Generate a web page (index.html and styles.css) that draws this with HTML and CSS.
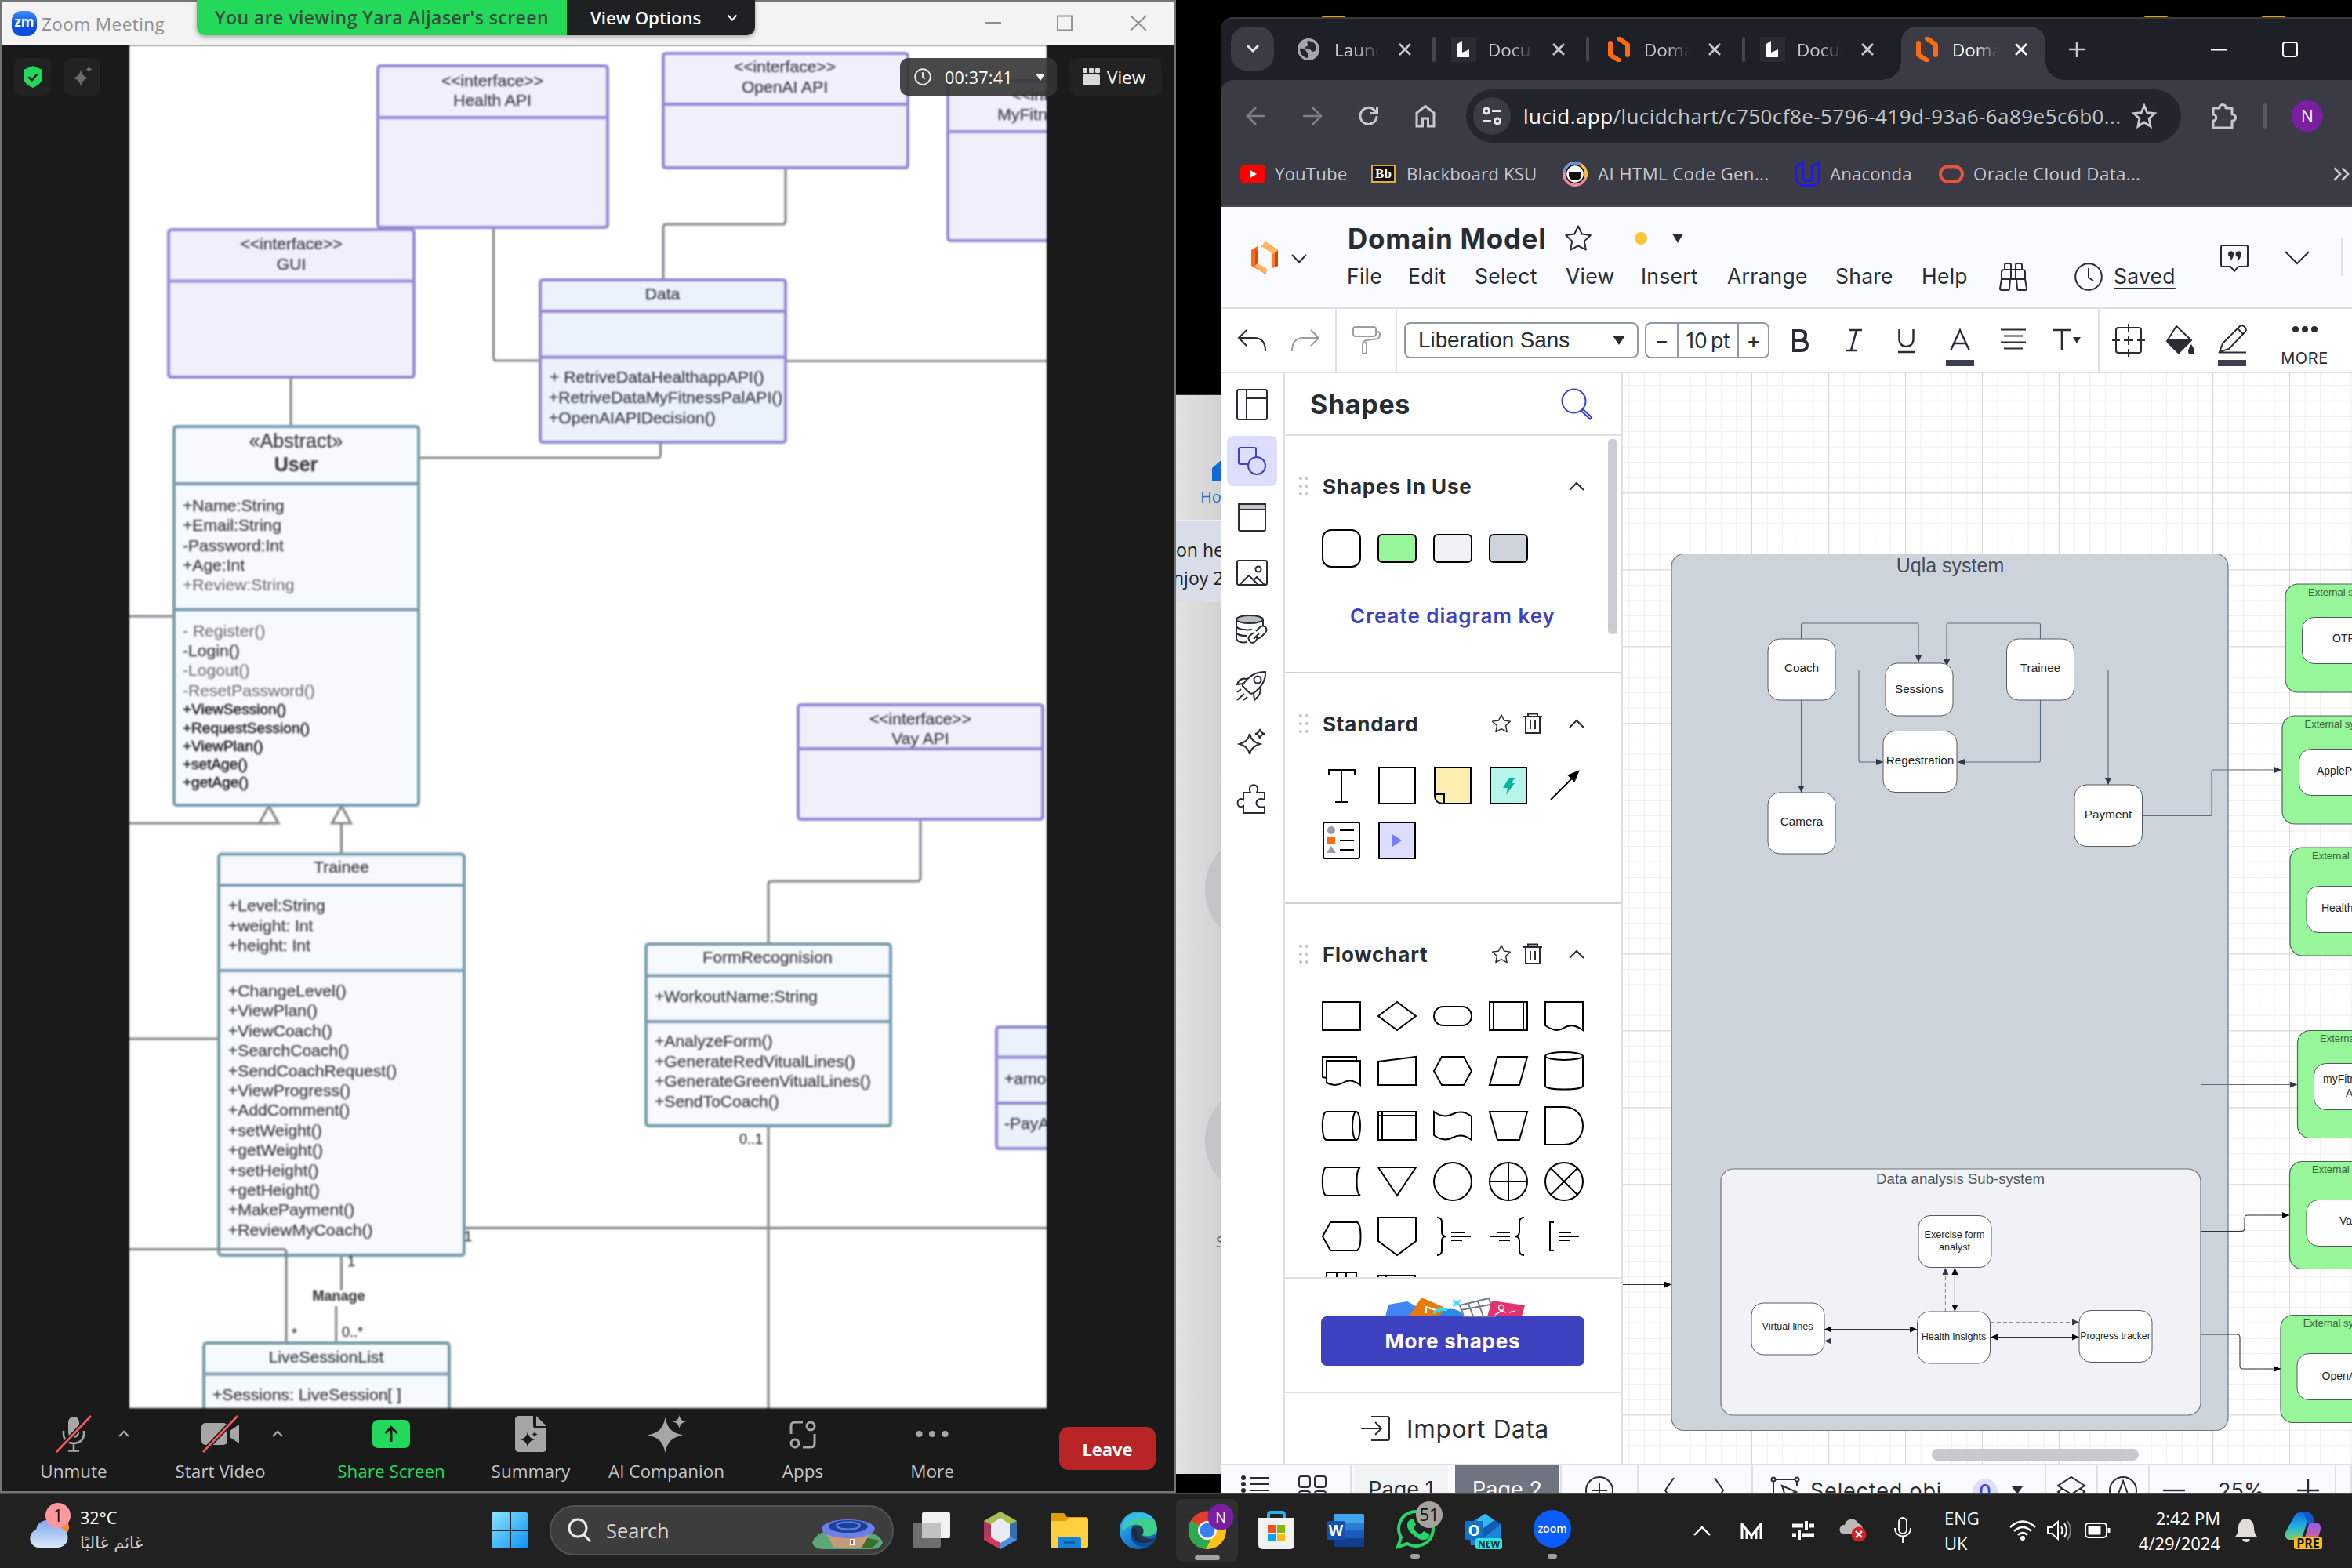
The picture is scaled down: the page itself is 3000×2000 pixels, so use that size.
FILE: index.html
```html
<!DOCTYPE html>
<html lang="en">
<head>
<meta charset="utf-8">
<title>Desktop</title>
<link rel="stylesheet" href="styles.css">
</head>
<body>
<svg width="0" height="0" class="defs">
  <defs>
    <symbol id="x" viewBox="0 0 18 18"><path d="M2 2 16 16M16 2 2 16" fill="none" stroke="currentColor" stroke-width="2.6"/></symbol>
    <symbol id="lucid" viewBox="0 0 30 32"><path d="M4 8v15l11 7M15 2l11 8v13" fill="none" stroke="#ff6a13" stroke-width="6" stroke-linejoin="round" stroke-linecap="round"/></symbol>
    <symbol id="spark" viewBox="0 0 32 32"><path d="M16 0c2 10 6 14 16 16-10 2-14 6-16 16-2-10-6-14-16-16 10-2 14-6 16-16z" fill="currentColor"/></symbol>
    <symbol id="star" viewBox="0 0 36 36"><path d="M18 2.500l4.800 10 11 1.500-8 7.600 2 11L18 27.300l-9.800 5.300 2-11-8-7.600 11-1.500z" fill="none" stroke="currentColor" stroke-width="2" stroke-linejoin="round"/></symbol>
    <symbol id="trash" viewBox="0 0 24 28"><path d="M0 5h24M6 5V1.500h12V5M3 5v21h18V5M9 10v11M15 10v11" fill="none" stroke="currentColor" stroke-width="2"/></symbol>
    <symbol id="up" viewBox="0 0 20 12"><path d="M1 11 10 2l9 9" fill="none" stroke="currentColor" stroke-width="2"/></symbol>
    <symbol id="dots" viewBox="0 0 12 24"><g fill="#bfc2c6"><circle cx="2" cy="2" r="2"/><circle cx="10" cy="2" r="2"/><circle cx="2" cy="12" r="2"/><circle cx="10" cy="12" r="2"/><circle cx="2" cy="22" r="2"/><circle cx="10" cy="22" r="2"/></g></symbol>
    <symbol id="docs" viewBox="0 0 32 32"><path d="M0 0h32v32H0z" fill="#2a2c33"/><path d="M8 9l6-4v15l9-4v10H8z" fill="#fff"/></symbol>
    <marker id="arr" viewBox="0 0 9 8" refX="9" refY="4" markerWidth="9" markerHeight="8" markerUnits="userSpaceOnUse" orient="auto-start-reverse"><path d="M0 0 9 4 0 8z" fill="#2f3a46"/></marker>
    <marker id="arrk" viewBox="0 0 9 8" refX="9" refY="4" markerWidth="9" markerHeight="8" markerUnits="userSpaceOnUse" orient="auto-start-reverse"><path d="M0 0 9 4 0 8z" fill="#000"/></marker>
    <pattern id="minor" x="2136" y="726.300" width="19.600" height="19.600" patternUnits="userSpaceOnUse"><path d="M.5 0v19.600M0 .5h19.600" stroke="#ededed" fill="none"/></pattern>
    <pattern id="major" x="2136" y="726.300" width="98" height="98" patternUnits="userSpaceOnUse"><path d="M.5 0v98M0 .5h98" stroke="#d6d6d6" fill="none"/></pattern>
    <linearGradient id="win" x2="1" y2="1"><stop offset="0" stop-color="#8be4ff"/><stop offset="1" stop-color="#0a93f5"/></linearGradient>
    <linearGradient id="cloud" x2="0" y2="1"><stop offset="0" stop-color="#7fa8ee"/><stop offset="1" stop-color="#dbe8fb"/></linearGradient>
    <linearGradient id="edge" x2="1" y2="1"><stop offset="0" stop-color="#35c1e8"/><stop offset=".45" stop-color="#1a88dc"/><stop offset="1" stop-color="#0b4ea0"/></linearGradient>
    <linearGradient id="cop" x2="0" y2="1"><stop offset="0" stop-color="#1667e0"/><stop offset=".5" stop-color="#1fb0e6"/><stop offset="1" stop-color="#7fd06a"/></linearGradient>
    <linearGradient id="cop2" x2="0" y2="1"><stop offset="0" stop-color="#8d5cf2"/><stop offset="1" stop-color="#f2607a"/></linearGradient>
  </defs>
</svg>

<div class="desktop">

  <!-- window behind the browser -->
  <div class="back-window">
    <svg class="back-home" viewBox="0 0 30 30"><path d="M0 30V13L15 0v30z" fill="#1169d8"/></svg>
    <span class="back-link">Ho</span>
    <div class="back-banner"><span>on he</span><span>njoy 2</span></div>
    <i class="back-circle c1"></i><i class="back-circle c2"></i>
    <span class="back-s">S</span>
  </div>
  <i class="folder f1"></i><i class="folder f2"></i><i class="folder f3"></i>

  <!-- Zoom meeting -->
  <section class="zoom">
    <header class="zoom-title">
      <span class="zm">zm</span><span class="zoom-name">Zoom Meeting</span>
      <svg class="zoom-ctl" width="210" height="24" viewBox="0 0 210 24"><path d="M1 11h20M93 2.500h18v18H93zM186 2l20 19M206 2l-20 19" fill="none" stroke="#8d8d8d" stroke-width="1.800"/></svg>
    </header>
    <div class="share-bar"><span class="viewing">You are viewing Yara Aljaser's screen</span><span class="view-opt">View Options<svg width="14" height="10" viewBox="0 0 14 10"><path d="M1.500 1.500 7 7.500l5.500-6" fill="none" stroke="#fff" stroke-width="2"/></svg></span></div>
    <div class="zoom-stage">
      <div class="stage-btn b1"><svg width="26" height="28" viewBox="0 0 26 28"><path d="M13 0l12 5v9c0 7-5 11-12 14C6 25 1 21 1 14V5z" fill="#23d959"/><path d="M7.500 14l4 4.500 7-8" fill="none" stroke="#1a1a1a" stroke-width="2.600"/></svg></div>
      <div class="stage-btn b2"><svg width="26" height="28" viewBox="0 0 26 28" color="#6b6b6b"><use href="#spark" x="0" y="4" width="22" height="23"/><use href="#spark" x="17" y="0" width="9" height="9"/></svg></div>

      <svg class="uml" width="1170" height="1738" viewBox="165 58 1170 1738">
        <rect x="165" y="58" width="1170" height="1738" fill="#fff"/>
        <g class="wire">
          <path d="M629.500 290V456q0 4 4 4H690M1002 214V282q0 4-4 4H850q-4 0-4 4V357M1002 460.500H1335M371 481V544M842.500 564V580q0 4-4 4H534M165 786H222M165 1050H343M435.500 1050V1090M165 1325H279M435.500 1601V1646M428.700 1666V1713M592 1566.400H1335M980 1436V1796M1174 1045V1120q0 4-4 4H984q-4 0-4 4V1204"/>
          <path d="M343 1028l12 22h-24zM435.500 1028l12 22h-24z" fill="#fff"/>
        </g>
        <g class="vio">
          <path d="M486 84H771q4 0 4 4V286q0 4-4 4H486q-4 0-4-4V88q0-4 4-4zM482 150H775"/>
          <path d="M850 68H1154q4 0 4 4V210q0 4-4 4H850q-4 0-4-4V72q0-4 4-4zM846 133H1158"/>
          <path d="M1213 103H1500V307H1213q-4 0-4-4V107q0-4 4-4zM1209 168H1500"/>
          <path d="M219 293H524q4 0 4 4V477q0 4-4 4H219q-4 0-4-4V297q0-4 4-4zM215 358.500H528"/>
          <path d="M1022 899H1326q4 0 4 4V1041q0 4-4 4H1022q-4 0-4-4V903q0-4 4-4zM1018 955H1330"/>
        </g>
        <g class="vio blue">
          <path d="M693 357H998q4 0 4 4V560q0 4-4 4H693q-4 0-4-4V361q0-4 4-4zM689 397H1002M689 455.500H1002"/>
          <path d="M1275 1310H1500V1465H1275q-4 0-4-4V1314q0-4 4-4zM1271 1348.500H1500M1271 1407H1500"/>
        </g>
        <g class="teal">
          <path d="M226 544H530q4 0 4 4V1023q0 4-4 4H226q-4 0-4-4V548q0-4 4-4zM222 617H534M222 777.500H534"/>
          <path d="M283 1089.500H588q4 0 4 4V1597q0 4-4 4H283q-4 0-4-4V1093.500q0-4 4-4zM279 1129H592M279 1238H592"/>
          <path d="M828 1204H1132q4 0 4 4V1432q0 4-4 4H828q-4 0-4-4V1208q0-4 4-4zM824 1244.500H1136M824 1303H1136"/>
          <path d="M264 1713H569q4 0 4 4V1900H260V1717q0-4 4-4zM260 1752.500H573"/>
        </g>
        <path class="wirel" d="M165 1593.500H361q4 0 4 4V1713"/>
        <g class="t mid" transform="translate(0 -1)">
          <text x="628" y="103">&lt;&lt;interface&gt;&gt;</text><text x="628" y="128">Health API</text>
          <text x="1001" y="85">&lt;&lt;interface&gt;&gt;</text><text x="1001" y="111">OpenAI API</text>
          <text x="1355" y="121">&lt;&lt;interface&gt;&gt;</text><text x="1355" y="146">MyFitnessPal API</text>
          <text x="371.500" y="311">&lt;&lt;interface&gt;&gt;</text><text x="371.500" y="337">GUI</text>
          <text x="845" y="375">Data</text>
          <text x="377.500" y="563" class="big">«Abstract»</text><text x="377.500" y="593" class="big bold">User</text>
          <text x="435.500" y="1106">Trainee</text>
          <text x="1174" y="917">&lt;&lt;interface&gt;&gt;</text><text x="1174" y="942">Vay API</text>
          <text x="979" y="1221">FormRecognision</text>
          <text x="416" y="1731">LiveSessionList</text>
          <text x="432" y="1654" class="small bold">Manage</text>
        </g>
        <g class="t" transform="translate(0 -1)">
          <text x="701" y="481">+ RetriveDataHealthappAPI()</text><text x="700" y="507">+RetriveDataMyFitnessPalAPI()</text><text x="700" y="533">+OpenAIAPIDecision()</text>
          <text x="233" y="645">+Name:String</text><text x="233" y="670">+Email:String</text><text x="233" y="696">-Password:Int</text><text x="233" y="721">+Age:Int</text><text x="233" y="746" class="pale">+Review:String</text>
          <text x="233" y="805" class="pale">- Register()</text><text x="233" y="830">-Login()</text><text x="233" y="855" class="pale">-Logout()</text><text x="233" y="881" class="pale">-ResetPassword()</text>
          <text x="233" y="905" class="dk">+ViewSession()</text><text x="233" y="929" class="dk">+RequestSession()</text><text x="233" y="952" class="dk">+ViewPlan()</text><text x="233" y="975" class="dk">+setAge()</text><text x="233" y="998" class="dk">+getAge()</text>
          <text x="291" y="1155">+Level:String</text><text x="291" y="1181">+weight: Int</text><text x="291" y="1206">+height: Int</text>
          <text x="291" y="1264">+ChangeLevel()</text><text x="291" y="1289">+ViewPlan()</text><text x="291" y="1315">+ViewCoach()</text><text x="291" y="1340">+SearchCoach()</text><text x="291" y="1366">+SendCoachRequest()</text><text x="291" y="1391">+ViewProgress()</text><text x="291" y="1416">+AddComment()</text><text x="291" y="1442">+setWeight()</text><text x="291" y="1467">+getWeight()</text><text x="291" y="1493">+setHeight()</text><text x="291" y="1518">+getHeight()</text><text x="291" y="1543">+MakePayment()</text><text x="291" y="1569">+ReviewMyCoach()</text>
          <text x="835" y="1271">+WorkoutName:String</text><text x="835" y="1328">+AnalyzeForm()</text><text x="835" y="1354">+GenerateRedVitualLines()</text><text x="835" y="1379">+GenerateGreenVitualLines()</text><text x="835" y="1405">+SendToCoach()</text>
          <text x="1281" y="1376">+amount:Int</text><text x="1281" y="1433">-PayAmount()</text>
          <text x="271" y="1779">+Sessions: LiveSession[ ]</text><text x="271" y="1804">+SessionDate:String</text>
          <g class="small"><text x="943" y="1454">0..1</text><text x="592" y="1578">1</text><text x="443" y="1610">1</text><text x="372" y="1702">*</text><text x="436" y="1700">0..*</text></g>
        </g>
      </svg>

      <div class="pill timer"><svg width="22" height="22" viewBox="0 0 22 22"><circle cx="11" cy="11" r="9.800" fill="none" stroke="#eee" stroke-width="1.800"/><path d="M11 5v6.500l3 2" fill="none" stroke="#eee" stroke-width="1.800"/></svg><span>00:37:41</span><svg width="12" height="9" viewBox="0 0 12 9"><path d="M0 0h12L6 9z" fill="#fff"/></svg></div>
      <div class="pill view"><svg width="22" height="22" viewBox="0 0 22 22" fill="#d9d9d9"><rect width="6" height="6" rx="1"/><rect x="8" width="6" height="6" rx="1"/><rect x="16" width="6" height="6" rx="1"/><rect y="8" width="22" height="14" rx="2"/></svg><span>View</span></div>
    </div>
    <footer class="zoom-bar">
      <div class="zb"><svg width="48" height="48" viewBox="0 0 48 48"><rect x="17" y="2" width="14" height="27" rx="7" fill="#a6a6a6"/><path d="M11 20v4c0 16 26 16 26 0v-4M24 37v8M17 45.500h14" fill="none" stroke="#a6a6a6" stroke-width="2.600"/><path d="M46 1 2 47" stroke="#1a1a1a" stroke-width="6"/><path d="M46 1 2 47" stroke="#f4595c" stroke-width="2.600"/></svg><span>Unmute</span></div>
      <svg class="car" width="14" height="9" viewBox="0 0 14 9"><path d="M1 8 7 2l6 6" fill="none" stroke="#a6a6a6" stroke-width="2.400"/></svg>
      <div class="zb"><svg width="50" height="48" viewBox="0 0 50 48"><rect x="1" y="10" width="33" height="28" rx="5" fill="#a6a6a6"/><path d="M37 20l12-8v24l-12-8z" fill="#a6a6a6"/><path d="M47 1 3 47" stroke="#1a1a1a" stroke-width="6"/><path d="M47 1 3 47" stroke="#f4595c" stroke-width="2.600"/></svg><span>Start Video</span></div>
      <svg class="car" width="14" height="9" viewBox="0 0 14 9"><path d="M1 8 7 2l6 6" fill="none" stroke="#a6a6a6" stroke-width="2.400"/></svg>
      <div class="zb green"><svg width="48" height="48" viewBox="0 0 48 48"><rect y="6" width="48" height="36" rx="7" fill="#23d959"/><path d="M24 34V16M16.500 23l7.500-7.500 7.500 7.500" fill="none" stroke="#1a1a1a" stroke-width="3"/></svg><span>Share Screen</span></div>
      <div class="zb"><svg width="42" height="48" viewBox="0 0 42 48" color="#1a1a1a"><path d="M6 1h18v12q0 4 4 4h13v25q0 5-5 5H6q-5 0-5-5V6q0-5 5-5z" fill="#a6a6a6"/><path d="M28 1l13 13H28z" fill="#a6a6a6"/><use href="#spark" x="7" y="20" width="20" height="22"/><use href="#spark" x="22" y="20" width="8" height="9"/></svg><span>Summary</span></div>
      <div class="zb"><svg width="50" height="48" viewBox="0 0 50 48" color="#a6a6a6"><use href="#spark" x="1" y="3" width="45" height="45"/><use href="#spark" x="33" y="0" width="17" height="17"/></svg><span>AI Companion</span></div>
      <div class="zb"><svg width="34" height="48" viewBox="0 0 34 48" fill="none" stroke="#a6a6a6" stroke-width="3"><circle cx="27" cy="14" r="5"/><circle cx="7" cy="36" r="5"/><path d="M17 9H7q-5 0-5 5v10M32 24v12q0 5-5 5H17"/></svg><span>Apps</span></div>
      <div class="zb"><svg width="42" height="48" viewBox="0 0 42 48" fill="#a6a6a6"><circle cx="4.500" cy="24" r="4"/><circle cx="21" cy="24" r="4"/><circle cx="37.500" cy="24" r="4"/></svg><span>More</span></div>
      <button class="leave">Leave</button>
    </footer>
  </section>

  <!-- Chrome -->
  <section class="chrome">
    <div class="tabs">
      <span class="tab-search"><svg width="18" height="12" viewBox="0 0 18 12"><path d="M2 2l7 7 7-7" fill="none" stroke="#e3e4e8" stroke-width="3"/></svg></span>
      <div class="tab sep"><svg width="28" height="28" viewBox="0 0 28 28"><circle cx="14" cy="14" r="14" fill="#a3a6ad"/><path d="M3 13c4-1 7 0 8 3s4 2 3 9C7 25 3 19 3 13zM13 3c-2 3 1 4 0 6s-3 1-3 3 5 0 7 3 5 2 7-1C25 8 20 3 13 3z" fill="#24262d"/></svg><span class="tt">Launch</span><svg class="tx"><use href="#x"/></svg></div>
      <div class="tab sep"><svg width="32" height="32"><use href="#docs"/></svg><span class="tt">Docum</span><svg class="tx"><use href="#x"/></svg></div>
      <div class="tab sep"><svg width="30" height="32"><use href="#lucid"/></svg><span class="tt">Domain</span><svg class="tx"><use href="#x"/></svg></div>
      <div class="tab"><svg width="32" height="32"><use href="#docs"/></svg><span class="tt">Docum</span><svg class="tx"><use href="#x"/></svg></div>
      <div class="tab active"><svg width="30" height="32"><use href="#lucid"/></svg><span class="tt">Domain</span><svg class="tx"><use href="#x"/></svg></div>
      <svg width="20" height="20" viewBox="0 0 20 20"><path d="M10 0v20M0 10h20" stroke="#c6c8ce" stroke-width="2.600"/></svg>
      <svg width="20" height="20" viewBox="0 0 20 20"><path d="M0 10.500h20" stroke="#fff" stroke-width="2"/></svg>
      <svg width="20" height="20" viewBox="0 0 20 20"><rect x="1" y="1" width="18" height="18" rx="3" fill="none" stroke="#fff" stroke-width="2"/></svg>
    </div>
    <div class="urlbar">
      <svg width="26" height="26" viewBox="0 0 26 26"><path d="M25 13H2M13 2 2 13l11 11" fill="none" stroke="#7d7e86" stroke-width="2.600"/></svg>
      <svg width="26" height="26" viewBox="0 0 26 26"><path d="M1 13h23M13 2l11 11-11 11" fill="none" stroke="#7d7e86" stroke-width="2.600"/></svg>
      <svg width="28" height="28" viewBox="0 0 28 28"><path d="M24 14a10.500 10.500 0 1 1-3-7.500l3 3M24.500 2v8.500H16" fill="none" stroke="#c6c8ce" stroke-width="3"/></svg>
      <svg width="26" height="30" viewBox="0 0 26 30"><path d="M2 11 13 2.500 24 11v17h-7.500V18h-7v10H2z" fill="none" stroke="#c6c8ce" stroke-width="3"/></svg>
      <div class="omni"><span class="chip"><svg width="26" height="24" viewBox="0 0 26 24" fill="none" stroke="#e4e5e8" stroke-width="3"><circle cx="6" cy="5.500" r="3.500"/><path d="M13 5.500h12M1 18.500h11"/><circle cx="20" cy="18.500" r="3.500"/></svg></span><span class="url"><b>lucid.app</b>/lucidchart/c750cf8e-5796-419d-93a6-6a89e5c6b0...</span><svg width="34" height="34" viewBox="0 0 36 36" class="bm"><path d="M18 4l4 9.500 10 1-7.500 7 2 10.500-8.500-5.500L9.500 32l2-10.500L4 14.500l10-1z" fill="none" stroke="#c6c8ce" stroke-width="3"/></svg></div>
      <svg width="34" height="34" viewBox="0 0 34 34"><path d="M3 7h8c-1-6 9-6 8 0h8v8c6-1 6 9 0 8v9H3v-9c5 0 5-8 0-8z" fill="none" stroke="#c6c8ce" stroke-width="3" stroke-linejoin="round"/></svg>
      <i class="usep"></i><span class="avatar">N</span>
    </div>
    <div class="marks">
      <svg width="32" height="24" viewBox="0 0 32 24"><rect width="32" height="24" rx="6" fill="#f00"/><path d="M12 6.500v11l9-5.500z" fill="#fff"/></svg><span>YouTube</span>
      <span class="bb">Bb</span><span>Blackboard KSU</span>
      <svg width="32" height="32" viewBox="0 0 32 32"><circle cx="16" cy="16" r="16" fill="#f08a9a"/><path d="M1 13a16 16 0 0 1 22-11l-7 14z" fill="#5a9bd0"/><path d="M25 3a16 16 0 0 1 6 18l-15-5z" fill="#f4c542"/><circle cx="16" cy="16" r="11.500" fill="#fff" stroke="#111" stroke-width="1.500"/><path d="M8 14h16v4q-1 6-8 6t-8-6z" fill="#111"/></svg><span class="wide">AI HTML Code Gen...</span>
      <svg width="32" height="32" viewBox="0 0 32 32"><path d="M2 7l9-6v19c0 8 10 6 11 0V6l9-5v21c0 8-7 9-14 9C7 31 2 28 2 20zM22 6v19" fill="none" stroke="#1f16f0" stroke-width="2.600"/></svg><span>Anaconda</span>
      <svg width="32" height="24" viewBox="0 0 32 24"><rect x="2" y="2.500" width="28" height="19" rx="9.500" fill="none" stroke="#e8523f" stroke-width="4"/></svg><span class="wide">Oracle Cloud Data...</span>
      <svg width="22" height="18" viewBox="0 0 22 18"><path d="M1.500 1.500 9 9l-7.500 7.500M11.500 1.500 19 9l-7.500 7.500" fill="none" stroke="#c6c8ce" stroke-width="2.800"/></svg>
    </div>

    <!-- Lucidchart -->
    <header class="lc-head">
      <div class="lc-logo"><svg width="36" height="42" viewBox="0 0 36 42"><path d="M1 11v20l19 11v-7L9 28V6z" fill="#ff6a13"/><path d="M9 13v15l-3 2V9z" fill="#d24f05"/><path d="M9 28l13 8-3 5L5 32z" fill="#ffb562"/><path d="M14 6l14 9v19l7-3V11L19 0z" fill="#ff7a22"/><path d="M14 6l5-6 16 11-6 5z" fill="#ffb562"/><path d="M31 15l4-3v19l-4 2z" fill="#c94800"/></svg><svg width="20" height="12" viewBox="0 0 20 12"><path d="M1 1l9 9.500L19 1" fill="none" stroke="#282c33" stroke-width="2"/></svg></div>
      <div class="lc-mid">
        <div class="lc-doc"><strong>Domain Model</strong><svg width="36" height="36"><use href="#star"/></svg><i class="dot"></i><svg width="14" height="12" viewBox="0 0 14 12"><path d="M0 0h14L7 12z" fill="#282c33"/></svg></div>
        <nav class="lc-menu"><span>File</span><span>Edit</span><span>Select</span><span>View</span><span>Insert</span><span>Arrange</span><span>Share</span><span>Help</span>
          <svg width="36" height="36" viewBox="0 0 36 36" fill="none" stroke="#282c33" stroke-width="2"><path d="M7 9V3q0-2 2-2h4q2 0 2 2v6M21 9V3q0-2 2-2h4q2 0 2 2v6M3 21V12q0-3 3-3h24q3 0 3 3v9M15 9v12M21 9v12M3 21h30M3 21 1 33q0 2 2 2h8q2 0 2-2l1-12M33 21l2 12q0 2-2 2h-8q-2 0-2-2l-1-12"/></svg>
          <svg width="36" height="36" viewBox="0 0 36 36" fill="none" stroke="#282c33" stroke-width="2"><circle cx="18" cy="18" r="16.800"/><path d="M18 7v12l6 4"/></svg><u>Saved</u></nav>
      </div>
      <div class="lc-right"><svg width="36" height="36" viewBox="0 0 36 36"><path d="M3 1h30q2 0 2 2v23q0 2-2 2H23l-5 6-5-6H3q-2 0-2-2V3q0-2 2-2z" fill="none" stroke="#282c33" stroke-width="2"/><path d="M10 12a3.600 3.600 0 1 1 7 1q-1 6-5 8 2-3 1-5-3-1-3-4zM19.500 12a3.600 3.600 0 1 1 7 1q-1 6-5 8 2-3 1-5-3-1-3-4z" fill="#282c33"/></svg><svg width="32" height="18" viewBox="0 0 32 18"><path d="M1 1l15 15L31 1" fill="none" stroke="#282c33" stroke-width="2"/></svg><i></i></div>
    </header>
    <div class="lc-tools">
      <div class="tg g1"><svg width="36" height="28" viewBox="0 0 36 28"><path d="M11 1 1 11l10 10M1 11h20q14 0 14 17" fill="none" stroke="#282c33" stroke-width="2"/></svg><svg width="36" height="28" viewBox="0 0 36 28"><path d="M25 1l10 10-10 10M35 11H15Q1 11 1 28" fill="none" stroke="#9a9da3" stroke-width="2"/></svg></div>
      <div class="tg g2"><svg width="36" height="36" viewBox="0 0 36 36" fill="none" stroke="#9a9da3" stroke-width="2"><rect x="1" y="1" width="29" height="12" rx="3"/><path d="M30 7h2q3 0 3 4t-3 5l-14 2q-3 0-3 3"/><rect x="13" y="21" width="5" height="14" rx="2"/></svg></div>
      <div class="tg g3">
        <div class="font-sel"><span>Liberation Sans</span><svg width="16" height="12" viewBox="0 0 16 12"><path d="M0 0h16L8 12z" fill="#282c33"/></svg></div>
        <div class="size"><b>−</b><span>10 pt</span><b>+</b></div>
        <svg width="24" height="56" viewBox="0 0 24 56"><path d="M3 16h8q7 0 7 6t-7 6H3zM3 28h9q8 0 8 6.500T12 41H3z" fill="none" stroke="#282c33" stroke-width="4"/></svg>
        <svg width="22" height="56" viewBox="0 0 22 56"><path d="M5 15h16M0 41h15M14 15 7 41" fill="none" stroke="#282c33" stroke-width="2.600"/></svg>
        <svg width="22" height="56" viewBox="0 0 22 56"><path d="M1.500 14v13c0 12 18 12 18 0V14M0 43h21" fill="none" stroke="#282c33" stroke-width="2.400"/></svg>
        <svg width="36" height="56" viewBox="0 0 36 56"><path d="M6 41l12-26 12 26M10 32h16" fill="none" stroke="#282c33" stroke-width="2.400"/><path d="M0 53h36v8H0z" fill="#3a414c"/></svg>
        <svg width="32" height="56" viewBox="0 0 32 56"><path d="M0 14.500h32M4 22.500h24M0 30.500h32M4 38.500h24" stroke="#282c33" stroke-width="2"/></svg>
        <svg width="36" height="56" viewBox="0 0 36 56"><path d="M0 15h22M11 15v26" stroke="#282c33" stroke-width="2.600"/><path d="M25 24h10l-5 8z" fill="#282c33"/></svg>
      </div>
      <div class="tg g4">
        <svg width="40" height="56" viewBox="0 0 40 56" fill="none" stroke="#282c33" stroke-width="2"><rect x="4" y="12" width="32" height="32" rx="3"/><path d="M20 7v10M20 39v10M-1 28h10M31 28h10M14 28h12M20 22v12"/></svg>
        <svg width="36" height="56" viewBox="0 0 36 56"><path d="M13 10 32 28 16 44 1 29z" fill="none" stroke="#282c33" stroke-width="2"/><path d="M2 27h30L15 45 1 31zM32 33q4 6 4 9a4 4 0 0 1-8 0q0-3 4-9z" fill="#282c33"/></svg>
        <svg width="36" height="56" viewBox="0 0 36 56"><path d="M2 43l4-11L28 10q3-2 6 1t1 6L14 39 2 43zM25 13l7 7M1 43.500h35" fill="none" stroke="#282c33" stroke-width="2"/><path d="M0 53h36v8H0z" fill="#3a414c"/></svg>
        <div class="more"><svg width="34" height="10" viewBox="0 0 34 10" fill="#282c33"><circle cx="5" cy="5" r="4"/><circle cx="17" cy="5" r="4"/><circle cx="29" cy="5" r="4"/></svg><span>MORE</span></div>
      </div>
    </div>
    <div class="lc-body">
      <aside class="rail">
        <span><svg width="40" height="40" viewBox="0 0 40 40"><rect x="1" y="1" width="38" height="38" rx="2"/><path d="M13 1v38M13 12h26"/></svg></span>
        <span class="on"><svg width="40" height="40" viewBox="0 0 40 40"><path d="M15 24H5q-2 0-2-2V5q0-2 2-2h18q2 0 2 2v10"/><circle cx="26" cy="26" r="11"/></svg></span>
        <span><svg width="40" height="40" viewBox="0 0 40 40"><path d="M3 3h34v7H3z" fill="#c3c5c9"/><rect x="3" y="3" width="34" height="34" rx="2"/><path d="M3 10h34"/></svg></span>
        <span><svg width="40" height="40" viewBox="0 0 40 40"><rect x="1" y="4" width="38" height="31" rx="2"/><circle cx="28" cy="15" r="3.500"/><path d="M4 35l12-12 12 12M22 29l4-4 10 10"/></svg></span>
        <span><svg width="42" height="40" viewBox="0 0 42 40"><ellipse cx="18" cy="7" rx="17" ry="5" fill="#b9bcc1"/><path d="M1 7v25c2 4 8 5 14 4M1 16c2 4 12 5 20 4M1 24c2 4 8 4 14 4M35 7v8M26 22l5-5q4-3 7 0t0 7l-6 6q-3 2-6 0M30 25l-7 7M29 30l-4 5q-4 4-7 0t0-7l5-4"/></svg></span>
        <span><svg width="40" height="40" viewBox="0 0 40 40"><path d="M8 19Q18 2 37 2q1 15-15 27l-4 1L8 20z"/><circle cx="27" cy="12" r="4.500"/><path d="M13 11Q4 9 1 18l8-1M30 22q3 8-7 16l-1-9M1 28l5-4M1 38l9-8M9 38l5-4"/></svg></span>
        <span><svg width="40" height="40" viewBox="0 0 40 40"><path d="M17 9q2 10 13 13-11 3-13 13-2-10-13-13Q15 19 17 9zM30 3q1 5 6 6-5 1-6 6-1-5-6-6 5-1 6-6z"/></svg></span>
        <span><svg width="40" height="40" viewBox="0 0 40 40"><path d="M9 12h9c-6-13 14-13 8 0h10v9c-14-5-14 13 0 9v8H9v-9c-10 6-10-13 0-8z"/></svg></span>
      </aside>
      <aside class="panel">
        <div class="p-head"><strong>Shapes</strong><svg width="40" height="40" viewBox="0 0 40 40" fill="none" stroke="#3e41c0" stroke-width="2"><circle cx="16.500" cy="16.500" r="15"/><path d="M26 29l2-2 11 10-2 2.500z"/></svg></div>
        <div class="p-scroll">
          <i class="p-thumb"></i>
          <section class="sec s1">
            <h3><svg class="dg"><use href="#dots"/></svg><span>Shapes In Use</span><i></i><i></i><svg class="up"><use href="#up"/></svg></h3>
            <div class="sw"><i class="w"></i><i class="g"></i><i class="l"></i><i class="d"></i></div>
            <a>Create diagram key</a>
          </section>
          <section class="sec s2">
            <h3><svg class="dg"><use href="#dots"/></svg><span>Standard</span><svg class="st"><use href="#star"/></svg><svg class="tr"><use href="#trash"/></svg><svg class="up"><use href="#up"/></svg></h3>
            <div class="shapes">
              <svg viewBox="-27 -27 54 54"><path d="M-16-14v-6h33v6M0-20v41M-8 21h16"/></svg>
              <svg viewBox="-27 -27 54 54"><rect x="-23" y="-23" width="46" height="46"/></svg>
              <svg viewBox="-27 -27 54 54"><path d="M-23-23h46v46h-36q-10-1-10-10z" fill="#fbecb0"/><path d="M-23 11h12v12"/></svg>
              <svg viewBox="-27 -27 54 54"><rect x="-23" y="-23" width="46" height="46" fill="#b7f5ea"/><path d="M1-10h7l-4 7h4L-3 12l2-9h-6z" fill="#00b5a0" stroke="none"/></svg>
              <svg viewBox="-27 -27 54 54"><path d="M-17 18 15-14"/><path d="M18-18 6-13l7 7z" fill="#000"/></svg>
              <svg viewBox="-27 -27 54 54"><rect x="-23" y="-23" width="46" height="46" rx="2"/><path d="M-2-13h18M-2 0h18M-2 12h18"/><g stroke="none"><circle cx="-13" cy="-13" r="5" fill="#959ca7"/><path d="M-18-5h10v9h-10z" fill="#ff6a13"/><path d="M-13 7l6 9h-12z" fill="#959ca7"/></g></svg>
              <svg viewBox="-27 -27 54 54"><rect x="-23" y="-23" width="46" height="46" fill="#dddeff"/><path d="M-6-8 6 0-6 8z" fill="#7b78ff" stroke="none"/></svg>
            </div>
          </section>
          <section class="sec s3">
            <h3><svg class="dg"><use href="#dots"/></svg><span>Flowchart</span><svg class="st"><use href="#star"/></svg><svg class="tr"><use href="#trash"/></svg><svg class="up"><use href="#up"/></svg></h3>
            <div class="shapes">
              <svg viewBox="-27 -27 54 54"><path d="M-24-18h48v36h-48z"/></svg>
              <svg viewBox="-27 -27 54 54"><path d="M-24 0 0-18 24 0 0 18z"/></svg>
              <svg viewBox="-27 -27 54 54"><rect x="-24" y="-12" width="48" height="24" rx="12"/></svg>
              <svg viewBox="-27 -27 54 54"><path d="M-24-18h48v36h-48zM-19-18v36M19-18v36"/></svg>
              <svg viewBox="-27 -27 54 54"><path d="M-24-18h48v36q-14-10-24-3t-24-3z"/></svg>
              <svg viewBox="-27 -27 54 54"><path d="M-19-13h43v31q-12-9-22-3t-21 0zM-19 9l-5-1v-26h43v5"/></svg>
              <svg viewBox="-27 -27 54 54"><path d="M-24-12 24-18v36h-48z"/></svg>
              <svg viewBox="-27 -27 54 54"><path d="M-24 0-14-18h28L24 0 14 18h-28z"/></svg>
              <svg viewBox="-27 -27 54 54"><path d="M-14-18h38L14 18h-38z"/></svg>
              <svg viewBox="-27 -27 54 54"><path d="M-24-19v38c0 6 48 6 48 0v-38"/><ellipse cy="-19" rx="24" ry="5"/></svg>
              <svg viewBox="-27 -27 54 54"><path d="M19-18h-38c-7 0-7 36 0 36h38"/><ellipse cx="19" rx="5" ry="18"/></svg>
              <svg viewBox="-27 -27 54 54"><path d="M-24-18h48v36h-48zM-24-13h48M-19-18v36"/></svg>
              <svg viewBox="-27 -27 54 54"><path d="M-24-18q12 9 24 3t24 3v30q-12-9-24-3t-24-3z"/></svg>
              <svg viewBox="-27 -27 54 54"><path d="M-24-18h48L14 18h-28z"/></svg>
              <svg viewBox="-27 -27 54 54"><path d="M-24-24H0c32 0 32 48 0 48h-24z"/></svg>
              <svg viewBox="-27 -27 54 54"><path d="M24-18h-43c-7 0-7 36 0 36h43c-6-3-6-33 0-36"/></svg>
              <svg viewBox="-27 -27 54 54"><path d="M-24-18h48L0 18z"/></svg>
              <svg viewBox="-27 -27 54 54"><circle r="24"/></svg>
              <svg viewBox="-27 -27 54 54"><circle r="24"/><path d="M-24 0h48M0-24v48"/></svg>
              <svg viewBox="-27 -27 54 54"><circle r="24"/><path d="M-17-17l34 34M17-17l-34 34"/></svg>
              <svg viewBox="-27 -27 54 54"><path d="M-24 0-14-18h34c6 3 6 33 0 36h-34z"/></svg>
              <svg viewBox="-27 -27 54 54"><path d="M-24-24h48V6L0 24-24 6z"/></svg>
              <svg viewBox="-27 -27 54 54"><path d="M-20-24q6 0 6 6v12q0 6 6 6-6 0-6 6v12q0 6-6 6M-2-5h17M-2 0h25M-2 5h14"/></svg>
              <svg viewBox="-27 -27 54 54"><path d="M20-24q-6 0-6 6v12q0 6-6 6 6 0 6 6v12q0 6 6 6M2-5h-17M2 0h-25M2 5h-14"/></svg>
              <svg viewBox="-27 -27 54 54"><path d="M-13-18h-5v36h5M-6-5H9M-6 0h25M-6 5H8"/></svg>
              <svg viewBox="-27 -27 54 54"><path d="M-19-24h38v48h-38zM-6-24v48M6-24v48"/></svg>
              <svg viewBox="-27 -27 54 54"><path d="M-24-20h47v36h-47zM-14-20v36"/></svg>
            </div>
          </section>
        </div>
        <div class="p-more">
          <svg width="336" height="24" viewBox="0 0 336 24"><path d="M82 24l4-15 24-4 18 10v9z" fill="#4285f4"/><path d="M112 24 128 0l28 12 4 12z" fill="#e87a0c"/><path d="M134 20v-8l12 4" fill="none" stroke="#fff" stroke-width="2"/><path d="M150 24q8-12 20-9t10 9z" fill="#2b8be8"/><path d="M143 20q10-8 18-4" fill="none" stroke="#36dcf0" stroke-width="4"/><path d="M168 2l5 3 6-3-3 5 3 4-6-1-5 2 1-5z" fill="#40dff7"/><path d="M182 24l-5-14 37-9 8 23zM178 16l38-7M188 8l6 16M200 5l7 19" fill="none" stroke="#737b88" stroke-width="2"/><path d="M212 24l6-20 42 6-4 14z" fill="#e5316f"/><circle cx="230" cy="13" r="3.500" fill="none" stroke="#fff" stroke-width="1.500"/><path d="M222 22l8-5 6 2M240 19l8-2" fill="none" stroke="#fff" stroke-width="1.500"/></svg>
          <button>More shapes</button>
        </div>
        <div class="p-import"><svg width="38" height="34" viewBox="0 0 38 34"><path d="M13 2h21q2 0 2 2v26q0 2-2 2H13M0 17h26M18 9l8 8-8 8" fill="none" stroke="#282c33" stroke-width="2"/></svg><span>Import Data</span></div>
      </aside>
      <svg class="canvas" width="930" height="1391" viewBox="2070 476 930 1391">
        <rect x="2070" y="476" width="930" height="1391" fill="#fff"/>
        <rect x="2070" y="476" width="930" height="1391" fill="url(#minor)"/><rect x="2070" y="476" width="930" height="1391" fill="url(#major)"/>
        <rect x="2132" y="706.500" width="710" height="1118" rx="16" class="sys"/>
        <text x="2487.500" y="721" class="h1">Uqla system</text>
        <g class="ext">
          <rect x="2915" y="745" width="200" height="138" rx="16"/><rect x="2911" y="913" width="200" height="138" rx="16"/><rect x="2921" y="1081" width="200" height="138" rx="16"/><rect x="2930.500" y="1314.500" width="200" height="137" rx="16"/><rect x="2920.500" y="1481.500" width="200" height="137" rx="16"/><rect x="2909" y="1677.500" width="200" height="137" rx="16"/>
        </g>
        <rect x="2195" y="1491" width="612" height="314" rx="16" class="sub"/>
        <text x="2500.600" y="1503.500" class="h2">Data analysis Sub-system</text>
        <g class="ln">
          <path marker-end="url(#arr)" d="M2297.500 815V797q0-2 2-2H2445q2 0 2 2V845"/><path marker-end="url(#arr)" d="M2602.500 815V797q0-2-2-2H2485q-2 0-2 2V850"/>
          <path marker-end="url(#arr)" d="M2341 854.500H2369q2 0 2 2V970q0 2 2 2H2402"/><path marker-end="url(#arr)" d="M2602.500 893V970q0 2-2 2H2497"/>
          <path marker-end="url(#arr)" d="M2646 854.500H2687q2 0 2 2V1001"/><path marker-end="url(#arr)" d="M2297.500 893V1011"/><path marker-end="url(#arr)" d="M2733 1040.500H2819q2 0 2-2V984q0-2 2-2H2910"/>
          <path marker-end="url(#arr)" d="M2807 1383.500H2930"/>
        </g>
        <g class="ln k">
          <path marker-end="url(#arrk)" d="M2070 1638.500H2132"/><path marker-end="url(#arrk)" d="M2807 1570.500H2859q4 0 4-4V1554q0-4 4-4H2920"/><path marker-end="url(#arrk)" d="M2807 1702H2853q4 0 4 4V1742q0 4 4 4H2909"/>
          <path marker-start="url(#arrk)" marker-end="url(#arrk)" d="M2493.400 1617V1673"/><path marker-start="url(#arrk)" marker-end="url(#arrk)" d="M2327 1695.500H2445"/><path marker-start="url(#arrk)" marker-end="url(#arrk)" d="M2539 1705.500H2652"/>
        </g>
        <g class="ln da"><path marker-end="url(#arr)" d="M2481.400 1673V1617"/><path marker-end="url(#arr)" d="M2445 1710.500H2327"/><path marker-end="url(#arr)" d="M2539 1686.500H2652"/></g>
        <g class="nd">
          <rect x="2255" y="815" width="86" height="78" rx="15"/><rect x="2405" y="846" width="86" height="67" rx="15"/><rect x="2402" y="932.500" width="94" height="78" rx="15"/><rect x="2559.500" y="815" width="86" height="78" rx="15"/><rect x="2255" y="1011" width="86" height="78" rx="15"/><rect x="2646" y="1001" width="86.500" height="78.500" rx="15"/>
          <rect x="2447" y="1550.500" width="93" height="66" rx="15"/><rect x="2234" y="1662" width="93" height="66" rx="15"/><rect x="2445.500" y="1673" width="93" height="66" rx="15"/><rect x="2652" y="1671.500" width="93" height="66" rx="15"/>
          <rect x="2936.500" y="787.500" width="160" height="59" rx="15"/><rect x="2932.500" y="955.500" width="160" height="59" rx="15"/><rect x="2942" y="1130.500" width="160" height="59" rx="15"/><rect x="2951.500" y="1356.500" width="160" height="59" rx="15"/><rect x="2942" y="1530.500" width="160" height="59" rx="15"/><rect x="2930" y="1726.500" width="160" height="59" rx="15"/>
        </g>
        <g class="n1"><text x="2298" y="851">Coach</text><text x="2448" y="878.500">Sessions</text><text x="2449" y="969">Regestration</text><text x="2602.500" y="851">Trainee</text><text x="2298" y="1047">Camera</text><text x="2689" y="1038">Payment</text></g>
        <g class="n2"><text x="2493" y="1575">Exercise form</text><text x="2493" y="1590.500">analyst</text><text x="2280" y="1692">Virtual lines</text><text x="2492" y="1704.500">Health insights</text><text x="2698" y="1703.500" class="tight">Progress tracker</text></g>
        <g class="n3"><text x="2975" y="814">OTP</text><text x="2955" y="983">ApplePay</text><text x="2961" y="1158">HealthApp</text><text x="2963" y="1376">myFitness</text><text x="2992" y="1394">API</text><text x="2984" y="1557">Vay</text><text x="2961.500" y="1755">OpenAI</text></g>
        <g class="n4"><text x="2944" y="755.500">External system</text><text x="2939.500" y="923.500">External system</text><text x="2949" y="1091.500">External system</text><text x="2959" y="1324.500">External system</text><text x="2949" y="1491">External system</text><text x="2937.700" y="1687.500">External system</text></g>
        <rect x="2464" y="1848" width="264" height="15" rx="7.500" fill="#c7c9cf"/>
      </svg>
    </div>
    <footer class="lc-foot">
      <div class="f f1"><svg width="36" height="36" viewBox="0 0 36 36"><path d="M11 3h25M11 11h25M11 19h25" stroke="#282c33" stroke-width="2"/><g fill="#282c33"><circle cx="3" cy="3" r="3"/><circle cx="3" cy="11" r="3"/><circle cx="3" cy="19" r="3"/></g></svg><svg width="36" height="36" viewBox="0 0 36 36" fill="none" stroke="#282c33" stroke-width="2"><rect x="1" y="1" width="14" height="14" rx="3"/><rect x="21" y="1" width="14" height="14" rx="3"/><rect x="1" y="20" width="14" height="14" rx="3"/><rect x="21" y="20" width="14" height="14" rx="3"/></svg></div>
      <div class="f f2"><span class="pg">Page 1</span><span class="pg cur">Page 2</span></div>
      <div class="f f3"><svg width="36" height="36" viewBox="0 0 36 36" fill="none" stroke="#282c33" stroke-width="2"><circle cx="18" cy="18" r="17"/><path d="M18 8v20M8 18h20"/></svg></div>
      <div class="f f4"><svg width="14" height="36" viewBox="0 0 14 36"><path d="M13 2 2 18l11 16" fill="none" stroke="#282c33" stroke-width="2"/></svg><svg width="14" height="36" viewBox="0 0 14 36"><path d="M1 2l11 16L1 34" fill="none" stroke="#282c33" stroke-width="2"/></svg></div>
      <div class="f f5"><svg width="36" height="36" viewBox="0 0 36 36" fill="none" stroke="#282c33" stroke-width="2"><path d="M6 4h24M3 7v24M33 7v6"/><circle cx="3" cy="4" r="2.500"/><circle cx="33" cy="4" r="2.500"/><path d="M14 12l18 8-8 3-4 8z"/></svg><span>Selected obj...</span><b>0</b><svg width="14" height="10" viewBox="0 0 14 10"><path d="M0 0h14L7 10z" fill="#282c33"/></svg></div>
      <div class="f f6"><svg width="36" height="36" viewBox="0 0 36 36" fill="none" stroke="#282c33" stroke-width="2"><path d="M18 1l17 11-17 11L1 12zM6 16l-5 4 17 11 17-11-5-4"/></svg></div>
      <div class="f f7"><svg width="36" height="36" viewBox="0 0 36 36" fill="none" stroke="#282c33" stroke-width="2"><circle cx="18" cy="18" r="17"/><path d="M10 28 18 6l8 22-8-4z"/></svg></div>
      <div class="f f8"><svg width="28" height="28" viewBox="0 0 28 28"><path d="M0 14h28" stroke="#282c33" stroke-width="2.400"/></svg><span>25%</span><svg width="28" height="28" viewBox="0 0 28 28"><path d="M0 14h28M14 0v28" stroke="#282c33" stroke-width="2.400"/></svg></div>
      <div class="f"></div>
    </footer>
  </section>

  <!-- Taskbar -->
  <footer class="taskbar">
    <div class="weather"><svg width="56" height="60" viewBox="0 0 56 60"><circle cx="40" cy="32" r="12" fill="#f58a1f"/><path d="M12 58a12 12 0 0 1-2-23 14 14 0 0 1 27-3 13 13 0 0 1 1 26z" fill="url(#cloud)"/><circle cx="38" cy="17" r="16" fill="#ff979f"/><text x="38" y="25" text-anchor="middle" class="wn">1</text></svg><p><span>32°C</span><span dir="rtl" class="ar">غائم غالبًا</span></p></div>
    <svg width="48" height="48" viewBox="0 0 48 48" fill="url(#win)"><path d="M2 1h20q1 0 1 1v21H0V3q0-2 2-2zM25 1h19q2 0 2 2v20H25zM0 25h23v22H2q-2 0-2-2zM25 25h21v20q0 2-2 2H25z"/></svg>
    <div class="search"><svg width="30" height="32" viewBox="0 0 30 32"><circle cx="13" cy="13" r="11" fill="none" stroke="#ececec" stroke-width="3"/><path d="M20 21l9 9" stroke="#ececec" stroke-width="3"/></svg><span>Search</span><svg width="90" height="40" viewBox="0 0 90 40"><path d="M0 31q4-12 18-15h50q20 5 22 15-4 8-14 8H14Q3 39 0 31z" fill="#5aa878"/><path d="M58 22l28 6-10 10H58z" fill="#3b6e2a"/><path d="M16 16h60l-14 22H28z" fill="#c39b78"/><ellipse cx="46" cy="13" rx="34" ry="12" fill="#6d7ee8"/><ellipse cx="46" cy="10" rx="25" ry="8" fill="#1d3f9c"/><ellipse cx="46" cy="9" rx="15" ry="4.500" fill="none" stroke="#5f86e0" stroke-width="2"/><path d="M48 26h6v8h-6z" fill="#fff"/><path d="M50 27h2v6h-2z" fill="#d33"/></svg></div>
    <svg width="48" height="48" viewBox="0 0 48 48"><rect x="0" y="14" width="36" height="32" rx="2" fill="#6e6e6e"/><rect x="12" y="1" width="36" height="33" rx="2" fill="#f1f1f1"/><path d="M12 14h24v20H12z" fill="#c2c2c2"/></svg>
    <svg width="42" height="48" viewBox="0 0 42 48"><path d="M0 12l21-12v48L0 36z" fill="#b3365c"/><path d="M21 0l21 12v24L21 48z" fill="#3a6ea8"/><path d="M21 0l21 12-10 5-11-6-11 6-10-5z" fill="#a6bf52"/><path d="M0 36l10-5 11 6v11z" fill="#d9355c"/><path d="M42 36l-10-5-11 6v11z" fill="#4a90e0"/><path d="M21 8l12 8v17l-12 7-12-7V16z" fill="#e9eaf2"/></svg>
    <svg width="48" height="48" viewBox="0 0 48 48"><path d="M0 4q0-2 2-2h15l4 5h25v14H0z" fill="#e0a005"/><path d="M0 12h20l4-4h22q2 0 2 2v34q0 2-2 2H2q-2 0-2-2z" fill="#ffcf3e"/><path d="M9 46V36q0-4 4-4h22q4 0 4 4v10z" fill="#1883d7"/><path d="M17 39.500h14" stroke="#0b4f8c" stroke-width="2"/></svg>
    <svg width="48" height="48" viewBox="0 0 48 48"><circle cx="24" cy="24" r="24" fill="url(#edge)"/><path d="M6 12C14-3 46-3 48 22c0 9-12 11-19 8 6-9-5-16-13-13q-8 3-12 9z" fill="#3fd08c"/><path d="M3 18C10-2 40-4 46 14 36 4 14 6 3 24z" fill="#38bfe8"/><path d="M17 19c-9 16 3 28 18 26q8-2 10-9c-16 6-26-3-22-12z" fill="#0d4b9b"/><path d="M28 30c8-8-4-16-11-11-3 4-2 12 3 18 10 6 22 2 26-4-5 3-12 2-18-3z" fill="#212121" opacity=".75"/></svg>
    <div class="tile"><svg width="60" height="76" viewBox="0 0 60 76"><circle cx="24" cy="36" r="24" fill="#fbc116"/><path d="M24 36 3 24a24 24 0 0 1 42 0z" fill="#e33b2e"/><path d="M24 36 3 24a24 24 0 0 0 19 36l10-19z" fill="#2da94f"/><circle cx="24" cy="36" r="12" fill="#fff"/><circle cx="24" cy="36" r="9.500" fill="#3a7df0"/><circle cx="41" cy="19" r="16.500" fill="#7b1fa2"/><text x="41" y="26" text-anchor="middle" class="av">N</text><rect x="8" y="68" width="32" height="6" rx="3" fill="#a5a29d"/></svg></div>
    <svg width="48" height="48" viewBox="0 0 48 48"><path d="M13 10V4q0-3 3-3h14q3 0 3 3v6" fill="none" stroke="#25b5e8" stroke-width="4"/><path d="M0 8h46v34q0 6-6 6H6q-6 0-6-6z" fill="#f1f1f1"/><path d="M12 17h10v10H12z" fill="#f25022"/><path d="M24 17h10v10H24z" fill="#7fba00"/><path d="M12 29h10v9H12z" fill="#00a4ef"/><path d="M24 29h10v9H24z" fill="#ffb900"/></svg>
    <svg width="48" height="48" viewBox="0 0 48 48"><path d="M10 3h36q2 0 2 2v9H10z" fill="#41a5ee"/><path d="M10 14h38v10H10z" fill="#2b7cd3"/><path d="M10 24h38v10H10z" fill="#185abd"/><path d="M10 34h38v9q0 2-2 2H10z" fill="#103f91"/><rect y="12" width="24" height="24" rx="2" fill="#1450b0"/><text x="12" y="31" text-anchor="middle" class="wd">W</text></svg>
    <div class="run"><svg width="60" height="76" viewBox="0 0 60 76"><path d="M2 59l4-12a22 22 0 1 1 8 8z" fill="#212121" stroke="#25d366" stroke-width="4"/><path d="M16 26q4-6 7 0l2 5-3 4q3 6 9 8l4-4 7 4q1 3-3 6-6 4-16-4T14 31q0-4 2-5z" fill="#25d366"/><circle cx="42" cy="18" r="17" fill="#a5a29d"/><text x="42" y="26" text-anchor="middle" class="bd">51</text><rect x="18" y="68" width="12" height="6" rx="3" fill="#a0a0a0"/></svg></div>
    <svg width="48" height="48" viewBox="0 0 48 48"><path d="M5 16 26 3l20 13v27H8z" fill="#1a86d9"/><path d="M26 3l20 13-24 20V10z" fill="#0f5fb0"/><path d="M26 3l12 8-22 16V10z" fill="#38b6f2"/><rect y="12" width="24" height="24" rx="2" fill="#1173c7"/><text x="12" y="31" text-anchor="middle" class="wd">O</text><rect x="14" y="34" width="34" height="14" rx="3" fill="#2fe3e0"/><text x="31" y="46" text-anchor="middle" class="nw">NEW</text></svg>
    <div class="run"><svg width="60" height="76" viewBox="0 0 60 76"><circle cx="24" cy="36" r="24" fill="#0b5cff"/><text x="24" y="41" text-anchor="middle" class="zt">zoom</text><rect x="18" y="68" width="12" height="6" rx="3" fill="#a0a0a0"/></svg></div>
    <svg width="22" height="14" viewBox="0 0 22 14"><path d="M1 13 11 3l10 10" fill="none" stroke="#fff" stroke-width="2.400"/></svg>
    <svg width="28" height="22" viewBox="0 0 28 22"><path d="M2 22V2M26 22V2M8 22V9M20 22V9M2 3l12 15L26 3M14 17v5" fill="none" stroke="#fff" stroke-width="3"/></svg>
    <svg width="28" height="24" viewBox="0 0 28 24"><path d="M0 6h28M0 18h28" stroke="#fff" stroke-width="5"/><path d="M18 0v12M9 12v12" stroke="#212121" stroke-width="8"/><path d="M18 0v12M9 12v12" stroke="#fff" stroke-width="4"/></svg>
    <svg width="34" height="30" viewBox="0 0 34 30"><path d="M5 20a6 6 0 0 1 1-12 9 9 0 0 1 17-2 8 8 0 0 1 3 14z" fill="#b9b9b9"/><circle cx="24" cy="20" r="9.500" fill="#d61f2b"/><path d="M20 16l8 8M28 16l-8 8" stroke="#fff" stroke-width="2.400"/></svg>
    <svg width="22" height="34" viewBox="0 0 22 34"><rect x="6" y="1" width="10" height="20" rx="5" fill="none" stroke="#fff" stroke-width="1.800"/><path d="M1 14c0 14 20 14 20 0M11 25v8" fill="none" stroke="#fff" stroke-width="1.800"/></svg>
    <p class="two">ENG<br>UK</p>
    <svg width="34" height="26" viewBox="0 0 34 26"><path d="M1 9q16-15 32 0M6 14q11-10 22 0M11 19q6-6 12 0" fill="none" stroke="#fff" stroke-width="2.400"/><circle cx="17" cy="23" r="3" fill="#fff"/></svg>
    <svg width="32" height="26" viewBox="0 0 32 26"><path d="M1 9h5l8-7v22l-8-7H1z" fill="none" stroke="#fff" stroke-width="2"/><path d="M18 8q3 5 0 10M22 4q6 9 0 18" fill="none" stroke="#fff" stroke-width="2"/><path d="M26 1q8 12 0 24" fill="none" stroke="#777" stroke-width="2"/></svg>
    <svg width="34" height="20" viewBox="0 0 34 20"><rect x="1" y="1" width="27" height="18" rx="4" fill="none" stroke="#fff" stroke-width="2"/><rect x="4.500" y="4.500" width="16" height="11" rx="1" fill="#fff"/><path d="M31 7v6" stroke="#fff" stroke-width="3"/></svg>
    <p class="two right">2:42 PM<br>4/29/2024</p>
    <svg width="28" height="32" viewBox="0 0 28 32"><path d="M0 24q4-4 4-11c0-16 20-16 20 0q0 7 4 11zM9 27h10q-1 4-5 4t-5-4z" fill="#e1ded9"/></svg>
    <svg width="48" height="48" viewBox="0 0 48 48"><path d="M33 14h6q8 0 7 9l-3 10q-2 8-8 8H20q4 0 5-5l5-17q1-5 3-5z" fill="url(#cop2)"/><path d="M13 5q2-4 8-4h8q5 0 7 6l2 7h-6q-4 0-5 5l-4 12q-1 5-5 5H7q-7 0-6-9 5-10 12-22z" fill="url(#cop)"/><path d="M21 1h8q5 0 7 6l2 7h-6q-4 0-5-5-1-6-6-8z" fill="#1457c8"/><rect x="12" y="32" width="36" height="16" rx="3" fill="#fdbd12"/><text x="30" y="45.500" text-anchor="middle" class="pre">PRE</text></svg>
  </footer>
</div>
</body>
</html>
```
FILE: styles.css
```css
* { box-sizing: border-box; }
body { margin: 0; background: #000; font-family: "Open Sans", "Noto Sans", sans-serif; }
.defs { position: absolute; }
svg { display: block; overflow: visible; flex: none; }
p { margin: 0; }
button { border: 0; font: inherit; padding: 0; }
.desktop { position: relative; width: 3000px; height: 2000px; overflow: hidden; background: #000; }

/* background window */
.back-window { position: absolute; left: 1500px; top: 502px; width: 57px; height: 1378px; overflow: hidden; background: linear-gradient(90deg, #e2e2e2, #d2d2d2); border-top: 2px solid #333; }
.back-home { position: absolute; left: 46px; top: 80px; width: 30px; height: 30px; }
.back-link { position: absolute; left: 31px; top: 116px; font-size: 20px; color: #1a74d6; }
.back-banner { position: absolute; left: 0; top: 159px; width: 57px; height: 105px; background: #d8dde7; color: #222; font-size: 23px; line-height: 36px; padding-top: 18px; display: flex; flex-direction: column; white-space: nowrap; border-top: 2px solid #eee; }
.back-banner span + span { margin-left: -4px; }
.back-circle { position: absolute; left: 37px; width: 146px; height: 146px; border-radius: 50%; background: #c4c4c9; }
.c1 { top: 557px; }
.c2 { top: 878px; }
.back-s { position: absolute; left: 51px; top: 1066px; font-size: 20px; color: #567; }
.folder { position: absolute; top: 20px; width: 34px; height: 6px; background: #e0a41a; border-radius: 6px 6px 0 0; }
.folder.f1 { left: 1684px; }
.folder.f2 { left: 2733px; }
.folder.f3 { left: 2883px; }

/* Zoom */
.zoom { position: absolute; left: 0; top: 0; width: 1500px; height: 1904px; background: #1a1a1a; border: 2px solid #757575; display: flex; flex-direction: column; }
.zoom-title { height: 56px; flex: none; background: #f3f3f3; display: flex; align-items: center; padding-left: 13px; font-size: 22.500px; color: #8f8f8f; }
.zm { width: 32px; height: 32px; border-radius: 12px; background: linear-gradient(#3b8cff, #0b4fe0 60%); color: #fff; font-weight: 700; font-size: 17px; line-height: 28px; text-align: center; margin-right: 6px; }
.zoom-name { flex: 1; letter-spacing: .45px; }
.zoom-ctl { margin-right: 32px; }
.share-bar { position: absolute; left: 249px; top: -2px; height: 45px; display: flex; border-radius: 0 0 10px 10px; overflow: hidden; font-weight: 600; font-size: 22.200px; box-shadow: 0 2px 6px rgba(0,0,0,.35); white-space: nowrap; }
.viewing { width: 472px; background: #23d959; color: #3a4a40; text-align: center; line-height: 44px; font-size: 23px; letter-spacing: .45px; }
.view-opt { width: 240px; background: #1f2022; color: #fff; padding: 0 22px 0 30px; display: flex; align-items: center; justify-content: space-between; }
.zoom-stage { flex: 1; position: relative; padding-left: 163px; }
.uml { overflow: hidden; filter: blur(.9px); }
.stage-btn { position: absolute; top: 16px; width: 47px; height: 48px; border-radius: 10px; background: #222; display: grid; place-items: center; }
.b1 { left: 16px; }
.b2 { left: 79px; }
.pill { position: absolute; top: 16px; height: 48px; border-radius: 10px; display: flex; align-items: center; color: #fff; font-size: 22.500px; }
.timer { left: 1146px; width: 200px; background: rgba(52,52,52,.9); padding: 0 15px 0 18px; }
.timer span { margin: 0 auto 0 17px; font-size: 21.500px; letter-spacing: .2px; }
.view { left: 1362px; width: 118px; background: #222; padding-left: 17px; gap: 9px; }
.wire path, .wirel { fill: none; stroke: #8a8b8f; stroke-width: 3.200; }
.wire path[fill] { fill: #fff; }
.vio path { fill: #f2effd; stroke: #988bd8; stroke-width: 4; }
.blue path { fill: #ebf2fc; }
.teal path { fill: #f6f9fe; stroke: #7b9eaf; stroke-width: 4; }
.t { font-family: "Liberation Sans", Arial, sans-serif; font-size: 21.100px; fill: #3f3f47; stroke: #3f3f47; stroke-width: .25; }
.t text { dominant-baseline: central; }
.mid { text-anchor: middle; }
.big { font-size: 25px; }
.bold { font-weight: 700; }
.small { font-size: 18px; }
.t .pale { fill: #6c6c72; stroke: none; }
.t .dk { font-size: 19px; fill: #1c1c1f; stroke: #1c1c1f; stroke-width: .5; }
.zoom-bar { height: 106px; flex: none; position: relative; color: #c4c4c4; font-size: 22.500px; display: grid; grid-template-columns: 86px 83px 122px 86px 142px 55px 104px 44px 154px 70px 54px 108px 60px 1fr; padding-left: 49px; }
.zb { display: flex; flex-direction: column; align-items: center; padding-top: 9px; white-space: nowrap; }
.zb svg { margin-bottom: 8px; }
.zb span { line-height: 32px; }
.zoom-bar > * { grid-row: 1; }
.zoom-bar > :nth-child(1) { grid-column: 1; }
.zoom-bar > :nth-child(2) { grid-column: 2; margin: 28px 0 0 14px; }
.zoom-bar > :nth-child(3) { grid-column: 3; }
.zoom-bar > :nth-child(4) { grid-column: 4; margin: 28px 0 0 5px; }
.zoom-bar > :nth-child(5) { grid-column: 5; }
.zoom-bar > :nth-child(6) { grid-column: 7; }
.zoom-bar > :nth-child(7) { grid-column: 9; }
.zoom-bar > :nth-child(8) { grid-column: 11; }
.zoom-bar > :nth-child(9) { grid-column: 13; }
.green { color: #23d959; }
.leave { grid-column: 14; justify-self: end; margin: 24px 24px 0 0; width: 123px; height: 55px; border-radius: 12px; background: #b92427; color: #fff; font-weight: 700; font-size: 22px; }

/* Chrome */
.chrome { --ink: #282c33; position: absolute; left: 1557px; top: 22px; width: 1443px; height: 1882px; border-top: 2px solid #3a3a3c; border-radius: 16px 0 0 0; overflow: hidden; background: #1e2028; display: flex; flex-direction: column; }
.tabs { height: 78px; flex: none; display: grid; grid-template-columns: 98px 196px 199px 195px 180px 214px 181px 91px 1fr; align-items: center; font-size: 22.500px; color: #c6c8ce; }
.tab-search { margin: -2px 0 0 13px; width: 55px; height: 56px; border-radius: 20px; background: #3a3b44; display: grid; place-items: center; }
.tab { position: relative; display: grid; grid-template-columns: 47px 81px 44px 4px; align-items: center; height: 32px; }
.tab.sep::after { content: ""; width: 4px; height: 32px; border-radius: 2px; background: #44464f; grid-column: 4; }
.tt { width: 60px; overflow: hidden; white-space: nowrap; -webkit-mask-image: linear-gradient(90deg, #000 50%, transparent 96%); mask-image: linear-gradient(90deg, #000 50%, transparent 96%); }
.tx { width: 18px; height: 18px; }
.tab.active { align-self: end; height: 68px; width: 184px; padding: 0 0 10px 18px; grid-template-columns: 47px 79px 1fr; background: #3a3b44; border-radius: 20px 20px 0 0; color: #fff; }
.tab.active::before, .tab.active::after { content: ""; position: absolute; bottom: 0; width: 24px; height: 24px; }
.tab.active::before { left: -24px; background: radial-gradient(circle at 0 0, transparent 23.500px, #3a3b44 24px); }
.tab.active::after { right: -24px; background: radial-gradient(circle at 100% 0, transparent 23.500px, #3a3b44 24px); }
.urlbar { height: 92px; flex: none; background: #3a3b44; border-radius: 16px 0 0 0; display: grid; grid-template-columns: 72px 71px 73px 65px 950px 67px 36px 1fr; padding-left: 32px; align-items: center; }
.omni { width: 912px; height: 68px; border-radius: 34px; background: #23252d; display: flex; align-items: center; padding: 0 30px 0 9px; }
.chip { width: 48px; height: 48px; border-radius: 50%; background: #3a3b44; display: grid; place-items: center; margin-right: 16px; flex: none; }
.url { flex: 1; white-space: nowrap; font-size: 26px; color: #c3c5c9; letter-spacing: .44px; }
.url b { font-weight: 400; color: #fff; }
.usep { width: 4px; height: 32px; background: #565862; border-radius: 2px; }
.avatar { width: 40px; height: 40px; border-radius: 50%; background: #7b1fa2; color: #fff; font-size: 21px; line-height: 40px; text-align: center; }
.marks { height: 70px; flex: none; background: #3a3b44; border-bottom: 2px solid #47484f; display: grid; grid-template-columns: 44px 123px 45px 199px 45px 251px 45px 139px 44px 459px 1fr; padding: 0 0 13px 25px; align-items: center; font-size: 22.300px; color: #c6c8ce; white-space: nowrap; }
.marks span { letter-spacing: .1px; }
.marks .wide { letter-spacing: .36px; }
.bb { width: 31px; height: 23px; background: #111; border: 2px solid #e0b030; color: #fff; font: 700 17px/19px "Liberation Serif", serif; text-align: center; }

/* Lucidchart header */
.lc-head { height: 130px; flex: none; background: #fafbfe; border-bottom: 2px solid #dde1e6; display: grid; grid-template-columns: 161px 1fr 168px; font-family: Inter, sans-serif; color: var(--ink); }
.lc-logo { display: flex; align-items: flex-start; padding: 44px 0 0 38px; gap: 16px; }
.lc-logo svg + svg { margin-top: 16px; }
.lc-doc { display: grid; grid-template-columns: 276px 90px 48px 1fr; align-items: center; padding: 0 0 2px 1px; height: 82px; }
.lc-doc strong { font-size: 35px; letter-spacing: .7px; font-weight: 650; white-space: nowrap; }
.dot { width: 16px; height: 16px; border-radius: 50%; background: #fcc438; }
.lc-menu { display: grid; grid-template-columns: 78px 85px 116px 96px 110px 138px 110px 99px 96px 50px 1fr; font-size: 26.500px; letter-spacing: .25px; align-items: center; margin-top: -11px; height: 36px; white-space: nowrap; }
.lc-menu span, .lc-menu u { margin-top: -2px; }
.lc-menu u { text-underline-offset: 5px; text-decoration-thickness: 2px; }
.lc-right { display: flex; padding-top: 48px; }
.lc-right svg + svg { margin: 8px 0 0 46px; }
.lc-right i { width: 2px; height: 48px; background: #dde1e6; margin: -8px 0 0 40px; }
.lc-tools { height: 82px; flex: none; background: #fff; border-bottom: 2px solid #dde1e6; display: grid; grid-template-columns: 148px 77px 896px 1fr; font-family: Inter, sans-serif; color: var(--ink); }
.tg { display: flex; align-items: center; border-right: 2px solid #dde1e6; }
.tg:last-child { border: 0; }
.g1 { padding-left: 22px; gap: 32px; }
.g2 { padding-left: 20px; }
.g3 { display: grid; grid-template-columns: 307px 187px 69px 67px 61px 70px 67px 1fr; padding-left: 9px; }
.font-sel { width: 299px; height: 46px; border: 2px solid #9298a6; border-radius: 8px; display: flex; align-items: center; justify-content: space-between; padding: 0 15px 0 16px; font: 27.800px "Liberation Sans", Arial, sans-serif; }
.size { width: 159px; height: 46px; border: 2px solid #9298a6; border-radius: 8px; display: grid; grid-template-columns: 39px 79px 1fr; text-align: center; line-height: 42px; font-size: 26.500px; }
.size span { border: solid #9298a6; border-width: 0 2px; word-spacing: -3px; letter-spacing: -.1px; }
.size b { font-weight: 500; }
.g4 { display: grid; grid-template-columns: 68px 66px 80px 1fr; padding-left: 17px; }
.more { display: flex; flex-direction: column; align-items: center; width: 61px; gap: 20px; margin-top: 15px; font-size: 20px; line-height: 24px; letter-spacing: .6px; }
.lc-body { flex: none; height: 1392px; border-bottom: 2px solid #dde1e6; display: grid; grid-template-columns: 80px 433px 930px; }
.rail { background: #fff; display: flex; flex-direction: column; gap: 7.800px; padding: 8px 8px 0; }
.rail span { height: 64px; border-radius: 8px; display: grid; place-items: center; }
.rail svg { fill: none; stroke: #282c33; stroke-width: 2; }
.rail .on { background: #dddeff; }
.rail .on svg { stroke: #3e41c0; }
.panel { background: #fff; border: solid #dde1e6; border-width: 0 2px; display: flex; flex-direction: column; font-family: Inter, sans-serif; color: var(--ink); }
.p-head { height: 80px; flex: none; border-bottom: 2px solid #dde1e6; display: flex; align-items: center; justify-content: space-between; padding: 0 37px 0 32px; font-size: 34px; letter-spacing: .7px; }
.p-head strong { font-weight: 650; }
.p-scroll { height: 1073px; flex: none; overflow: hidden; position: relative; }
.p-thumb { position: absolute; left: 412px; top: 4px; width: 12px; height: 249px; border-radius: 5px; background: #c9ccd1; }
.sec { border-bottom: 2px solid #ccd3da; padding-top: 42px; }
.s1 { height: 303px; }
.s2 { height: 294px; }
.s3 { border: 0; }
.sec h3 { margin: 0; height: 44px; display: grid; grid-template-columns: 30px 215px 41px 58px 1fr; padding-left: 18px; align-items: center; font-size: 26px; font-weight: 650; letter-spacing: .85px; white-space: nowrap; }
.dg { width: 12px; height: 24px; }
.st { width: 26px; height: 26px; stroke-width: 3; }
.tr { width: 24px; height: 28px; }
.up { width: 20px; height: 12px; }
.sw { display: flex; gap: 21.500px; align-items: center; padding-left: 47px; height: 50px; margin-top: 32px; }
.sw i { width: 49.500px; height: 37px; border: 2px solid #000; border-radius: 6px; }
.sw .w { height: 49px; border-radius: 12px; }
.sw .g { background: #97f59a; }
.sw .l { background: #f1f2f5; }
.sw .d { background: #ccd3db; }
.sec a { display: block; margin: 46px 0 0 83px; font-size: 26px; line-height: 32px; font-weight: 600; letter-spacing: 1px; color: #3e41c0; white-space: nowrap; }
.shapes { display: grid; grid-template-columns: repeat(5, 71px); grid-auto-rows: 70.200px; align-items: center; padding-left: 45px; margin-top: 22px; }
.shapes svg { width: 54px; height: 54px; fill: none; stroke: #000; stroke-width: 2; }
.p-more { height: 148px; flex: none; border: solid #dde1e6; border-width: 2px 0; padding: 24px 0 0 46px; }
.p-more button { display: block; width: 336px; height: 63px; border-radius: 7px; background: #3e41c0; color: #fff; font-size: 26px; font-weight: 650; letter-spacing: .8px; }
.p-import { flex: 1; display: flex; align-items: center; gap: 20px; padding-left: 97px; font-size: 31.500px; letter-spacing: .7px; white-space: nowrap; }

/* canvas */
.canvas { overflow: hidden; font-family: "Liberation Sans", Arial, sans-serif; }
.canvas text { dominant-baseline: central; }
.sys { fill: #ccd3db; stroke: #6c7580; stroke-width: 1.200; }
.sub { fill: #f1f2f5; stroke: #6c7580; stroke-width: 1.200; }
.ext rect { fill: #97f59a; stroke: #4d6654; stroke-width: 1.200; }
.nd rect { fill: #fff; stroke: #555a61; }
.ln path { fill: none; stroke: #5f6c78; stroke-width: 1.100; }
.k path { stroke: #333; }
.da path { stroke: #8a8d92; stroke-dasharray: 5 3; }
.h1, .h2, .n1, .n2 { text-anchor: middle; }
.h1 { font-size: 25px; fill: #474e58; }
.h2 { font-size: 18.600px; fill: #505560; }
.n1 { font-size: 15.300px; fill: #222428; }
.n2 { font-size: 12.600px; fill: #222428; }
.n2 .tight { font-size: 12.200px; }
.n3 { font-size: 14px; fill: #222428; }
.n4 { font-size: 13px; fill: #3c6344; }
.lc-foot { flex: none; height: 36px; background: #fafbfe; display: grid; grid-template-columns: 167px 268px 98px 146px 374px 66px 66px 238px 1fr; font-family: Inter, sans-serif; font-size: 27px; color: var(--ink); overflow: hidden; white-space: nowrap; }
.f { border-right: 2px solid #dde1e6; height: 66px; display: flex; align-items: center; }
.lc-foot .f1 { padding-left: 26px; gap: 37px; padding-bottom: 2px; }
.lc-foot .f2 { padding-left: 3px; gap: 9px; }
.pg { width: 120px; height: 66px; line-height: 64px; background: #f1f3f5; text-align: center; }
.pg.cur { width: 133px; background: #6e7480; color: #fff; }
.lc-foot .f3, .f6, .f7 { justify-content: center; }
.f4 { padding-left: 32px; gap: 50px; }
.f5 { padding-left: 23px; }
.f5 span { width: 207px; padding-left: 14px; overflow: hidden; letter-spacing: .8px; }
.f5 b { width: 32px; height: 34px; line-height: 34px; text-align: center; border-radius: 50%; background: #dddeff; color: #3e41c0; font-size: 24px; font-weight: 500; margin: 4px 18px 0 14px; }
.f8 { padding-left: 17px; gap: 42px; }

/* taskbar */
.taskbar { position: absolute; left: 0; top: 1904px; width: 3000px; height: 96px; background: #212121; border-top: 2px solid #484848; display: grid; grid-template-columns: 591px 74px 463px 91px 85px 88px 72px 105px 87px 89px 87px 88px 204px 60px 66px 61px 69px 64px 83px 48px 48px 63px 129px 63px 1fr; padding: 0 0 2px 36px; align-items: center; color: #fff; font-size: 23px; }
.taskbar p { line-height: 32px; white-space: nowrap; }
.weather { display: flex; gap: 10px; align-items: center; }
.weather p { display: flex; flex-direction: column; }
.weather svg { margin-top: -12px; }
.weather span { font-size: 21.500px; }
.weather .ar { font-family: "DejaVu Sans", sans-serif; font-size: 21px; color: #d0d0d0; }
.wn { font-size: 22px; fill: #111; }
.search { width: 439px; height: 64px; border-radius: 32px; background: #3d3d3d; border: 2px solid #525252; display: flex; align-items: center; padding: 0 12px 0 21px; color: #d5d5d5; font-size: 25.500px; }
.search span { flex: 1; padding-left: 19px; }
.search svg:last-child { margin-top: 10px; }
.tile { width: 79px; height: 80px; border-radius: 8px; background: #2f2f2f; padding: 4px 0 0 16px; }
.av { font-size: 18px; fill: #fff; }
.wd { font-size: 19px; font-weight: 700; fill: #fff; }
.bd { font-size: 22px; fill: #111; }
.nw { font-size: 12px; font-weight: 700; fill: #06323a; }
.zt { font-size: 14px; font-weight: 600; fill: #fff; }
.pre { font-size: 16px; font-weight: 700; fill: #111; }
.two { font-size: 22px; }
.two.right { text-align: right; width: 110px; }
```
